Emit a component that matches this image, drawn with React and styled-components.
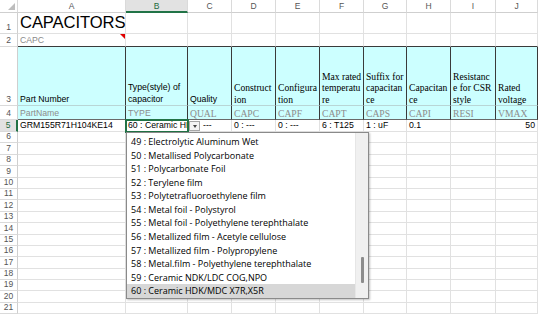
import React from "react";
import styled, { createGlobalStyle } from "styled-components";

const GlobalStyle = createGlobalStyle`
  html, body { margin: 0; padding: 0; background: #fff; }
  body { font-family: "Liberation Sans", Arial, sans-serif; }
`;

const COLS = ["A", "B", "C", "D", "E", "F", "G", "H", "I", "J"];
const ROWS = [13, 21, 13, 59, 14, 12, ...Array(16).fill(11.4)];

const Sheet = styled.div`
  position: relative;
  width: 538px;
  height: 315px;
  overflow: hidden;
  display: grid;
  grid-template-columns: 18px 108px 62px 44px 44px 44px 44px 43px 44px 45px 42px;
  grid-template-rows: ${ROWS.map(r => r + "px").join(" ")};
`;

const ColHead = styled.div`
  box-sizing: border-box;
  display: flex;
  align-items: center;
  justify-content: center;
  font-size: 8.5px;
  color: ${p => (p.$active ? "#1e6b40" : "#555")};
  background: ${p => (p.$active ? "#e2e2e2" : "#fff")};
  border-right: 1px solid #dadada;
  border-bottom: ${p => (p.$active ? "2px solid #217346" : "1px solid #cfcfcf")};
`;

const Corner = styled.div`
  box-sizing: border-box;
  border-right: 1px solid #dadada;
  border-bottom: 1px solid #cfcfcf;
  display: flex;
  align-items: flex-end;
  justify-content: flex-end;
  padding: 2px;
`;

const RowHead = styled.div`
  box-sizing: border-box;
  display: flex;
  align-items: flex-end;
  justify-content: center;
  font-size: 8.5px;
  line-height: 11px;
  color: ${p => (p.$active ? "#1e6b40" : "#555")};
  background: ${p => (p.$active ? "#e2e2e2" : "#fff")};
  border-right: ${p => (p.$active ? "2px solid #217346" : "1px solid #cfcfcf")};
  border-bottom: 1px solid #dadada;
`;

const Cell = styled.div`
  position: relative;
  box-sizing: border-box;
  min-width: 0;
  overflow: ${p => (p.$spill ? "visible" : "hidden")};
  white-space: nowrap;
  display: flex;
  flex-direction: column;
  justify-content: flex-end;
  align-items: ${p => (p.$right ? "flex-end" : "flex-start")};
  padding: 0 2px 0 ${p => p.$indent || "2px"};
  background: ${p => p.$bg || "#fff"};
  border-right: 1px solid ${p => p.$vr || "#e1e1e1"};
  border-bottom: 1px solid ${p => p.$hr || "#e1e1e1"};
  font-family: ${p =>
    p.$serif
      ? '"Liberation Serif", "Times New Roman", serif'
      : '"Liberation Sans", Arial, sans-serif'};
  font-size: ${p => (p.$serif ? "9.6px" : "8.7px")};
  line-height: ${p => (p.$tall ? "11.3px" : "11px")};
  color: ${p => p.$color || "#000"};
  z-index: ${p => (p.$spill ? 1 : 0)};
`;

const Title = styled.span`
  font-size: 16.6px;
  line-height: 20px;
  letter-spacing: -0.1px;
`;

const CommentMark = styled.span`
  position: absolute;
  top: 0;
  right: 0;
  width: 0;
  height: 0;
  border-top: 5px solid #e00000;
  border-left: 5px solid transparent;
`;

const Active = styled.div`
  position: absolute;
  left: 125px;
  top: 119px;
  width: 64px;
  height: 14px;
  box-sizing: border-box;
  border: 2px solid #217346;
  pointer-events: none;
  z-index: 3;
`;

const DropButton = styled.div`
  position: absolute;
  left: 189px;
  top: 121px;
  width: 11px;
  height: 10px;
  box-sizing: border-box;
  background: #f4f4f4;
  border: 1px solid #a6a6a6;
  display: flex;
  align-items: center;
  justify-content: center;
  z-index: 4;
  &::after {
    content: "";
    border-top: 3px solid #444;
    border-left: 2.5px solid transparent;
    border-right: 2.5px solid transparent;
  }
`;

const ListBox = styled.div`
  position: absolute;
  left: 126px;
  top: 132px;
  width: 243px;
  height: 167px;
  box-sizing: border-box;
  background: #fff;
  border: 1px solid #8a8a8a;
  box-shadow: 1px 1px 2px rgba(0, 0, 0, 0.25);
  display: flex;
  z-index: 5;
`;

const Items = styled.div`
  flex: 1;
  padding-top: 2px;
  display: flex;
  flex-direction: column;
`;

const Item = styled.div`
  height: 13.6px;
  line-height: 13.6px;
  padding-left: 4px;
  font-family: "Open Sans", "Noto Sans", sans-serif;
  font-size: 9px;
  color: #000;
  white-space: nowrap;
  overflow: hidden;
  background: ${p => (p.$selected ? "#d7d7d7" : "transparent")};
`;

const ScrollTrack = styled.div`
  width: 13px;
  background: #f0f0f0;
  border-left: 1px solid #e6e6e6;
  display: flex;
  justify-content: center;
  padding-top: 124px;
  box-sizing: border-box;
`;

const Thumb = styled.div`
  width: 3px;
  height: 26px;
  background: #8c8c8c;
  border-radius: 1px;
`;

const header3 = [
  { lines: ["Part Number"] },
  { lines: ["Type(style) of", "capacitor"] },
  { lines: ["Quality"] },
  { lines: ["Construct", "ion"], serif: true },
  { lines: ["Configura", "tion"], serif: true },
  { lines: ["Max rated", "temperatu", "re"], serif: true },
  { lines: ["Suffix for", "capacitan", "ce"], serif: true },
  { lines: ["Capacitan", "ce"], serif: true },
  { lines: ["Resistanc", "e for CSR", "style"], serif: true },
  { lines: ["Rated", "voltage"], serif: true }
];

const header4 = [
  { text: "PartName" },
  { text: "TYPE" },
  { text: "QUAL", serif: true },
  { text: "CAPC", serif: true },
  { text: "CAPF", serif: true },
  { text: "CAPT", serif: true },
  { text: "CAPS", serif: true },
  { text: "CAPI", serif: true },
  { text: "RESI", serif: true },
  { text: "VMAX", serif: true }
];

const row5 = [
  "GRM155R71H104KE14",
  "60 : Ceramic HDK/MDC X7R,X5R",
  "---",
  "0 : ---",
  "0 : ---",
  "6 : T125",
  "1 : uF",
  "0.1",
  "",
  "50"
];

const options = [
  "49 : Electrolytic Aluminum Wet",
  "50 : Metallised Polycarbonate",
  "51 : Polycarbonate Foil",
  "52 : Terylene film",
  "53 : Polytetrafluoroethylene film",
  "54 : Metal foil - Polystyrol",
  "55 : Metal foil - Polyethylene terephthalate",
  "56 : Metallized film - Acetyle cellulose",
  "57 : Metallized film - Polypropylene",
  "58 : Metal.film - Polyethylene terephthalate",
  "59 : Ceramic NDK/LDC COG,NPO",
  "60 : Ceramic HDK/MDC X7R,X5R"
];

const CYAN = "#ccffff";
const DARK = "#3a3a3a";

function renderRow(r) {
  const cells = [];
  cells.push(
    <RowHead key={"h" + r} $active={r === 5}>
      {r}
    </RowHead>
  );
  COLS.forEach((c, i) => {
    const key = c + r;
    if (r === 1) {
      cells.push(
        <Cell key={key} $spill={i === 0}>
          {i === 0 && <Title>CAPACITORS</Title>}
        </Cell>
      );
    } else if (r === 2) {
      cells.push(
        <Cell key={key} $hr={DARK} $color="#8a8a8a">
          {i === 0 && "CAPC"}
          {i === 0 && <CommentMark />}
        </Cell>
      );
    } else if (r === 3) {
      const h = header3[i];
      cells.push(
        <Cell key={key} $bg={CYAN} $vr={DARK} $hr="#b9d6d6" $serif={h.serif} $tall>
          {h.lines.map(l => (
            <span key={l}>{l}</span>
          ))}
        </Cell>
      );
    } else if (r === 4) {
      const h = header4[i];
      cells.push(
        <Cell key={key} $bg={CYAN} $vr={DARK} $hr="#6a6a6a" $serif={h.serif} $color="#8c8c8c">
          {h.text}
        </Cell>
      );
    } else if (r === 5) {
      cells.push(
        <Cell key={key} $right={i === 9} $indent={i === 2 ? "15px" : undefined}>
          {row5[i]}
        </Cell>
      );
    } else {
      cells.push(<Cell key={key} />);
    }
  });
  return cells;
}

export default function App() {
  const rows = Array.from({ length: 21 }, (_, k) => k + 1);
  return (
    <>
      <GlobalStyle />
      <Sheet>
        <Corner>
          <svg width="7" height="7" viewBox="0 0 7 7">
            <polygon points="7,0 7,7 0,7" fill="#bdbdbd" />
          </svg>
        </Corner>
        {COLS.map(c => (
          <ColHead key={c} $active={c === "B"}>
            {c}
          </ColHead>
        ))}
        {rows.map(r => renderRow(r))}
        <Active />
        <DropButton />
        <ListBox>
          <Items>
            {options.map((o, i) => (
              <Item key={o} $selected={i === options.length - 1}>
                {o}
              </Item>
            ))}
          </Items>
          <ScrollTrack>
            <Thumb />
          </ScrollTrack>
        </ListBox>
      </Sheet>
    </>
  );
}
